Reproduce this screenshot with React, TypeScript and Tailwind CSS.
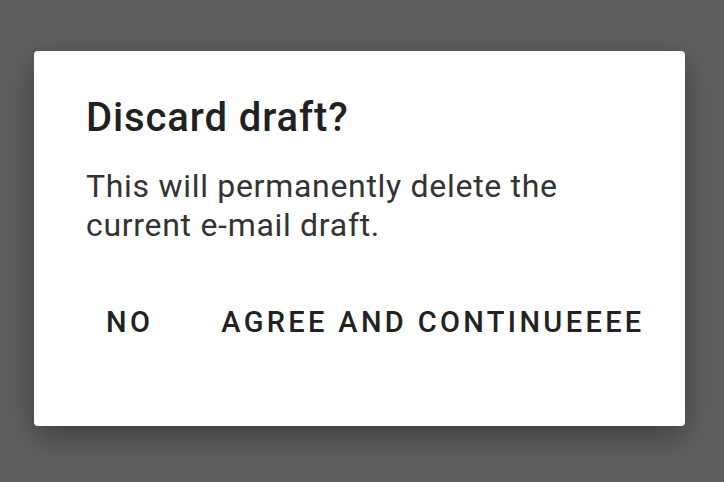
import React from "react";

export default function App() {
  return (
    <div className="w-[724px] h-[482px] bg-[#5f5f5f] pl-[34px] pt-[51px] overflow-hidden" style={{ fontFamily: "Roboto, 'Noto Sans', sans-serif" }}>
      <div className="w-[651px] h-[375px] bg-white rounded-[4px] shadow-[0_10px_30px_rgba(0,0,0,0.35)] flex flex-col pl-[52px] pr-[20px] pt-[43px]">
        <div className="text-[40px] leading-[48px] font-medium tracking-[0.9px] text-[#212121]">Discard draft?</div>
        <div className="mt-[25px] text-[32px] leading-[39px] tracking-[0.7px] text-[#333333]">
          This will permanently delete the
          <br />
          current e-mail draft.
        </div>
        <div className="mt-[59px] flex items-center text-[29px] leading-[36px] font-medium tracking-[3.35px] text-[#222222] whitespace-nowrap">
          <span className="ml-[20px]">NO</span>
          <span className="ml-[68px]">AGREE AND CONTINUEEEE</span>
        </div>
      </div>
    </div>
  );
}
